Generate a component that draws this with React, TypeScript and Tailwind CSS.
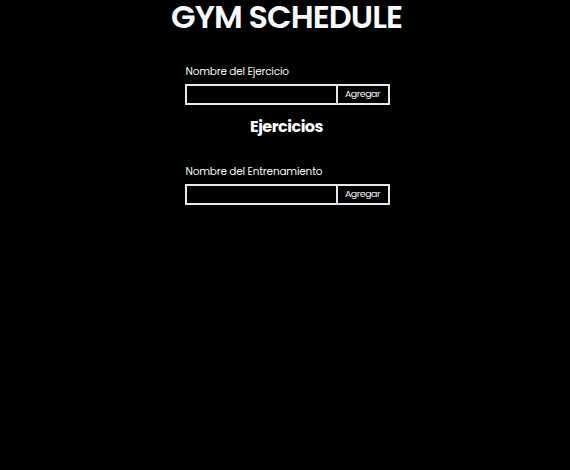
import React, { useState } from 'react';

const FormRow: React.FC<{ label: string }> = ({ label }) => {
  const [value, setValue] = useState('');
  return (
    <div className="w-[205px] mx-auto translate-x-[2px]">
      <label className="block pl-[1px] text-[10.5px] leading-[16px] tracking-[-0.2px] text-gray-100">{label}</label>
      <div className="flex mt-[4px] h-[21px]">
        <input
          value={value}
          onChange={e => setValue(e.target.value)}
          className="flex-1 min-w-0 bg-black border-2 border-gray-200 outline-none text-white text-[11px] px-1"
        />
        <button className="w-[52px] bg-black border-2 border-l-0 border-gray-200 text-[9.5px] tracking-[-0.5px] text-gray-100">
          Agregar
        </button>
      </div>
    </div>
  );
};

const App: React.FC = () => {
  return (
    <div className="min-h-[470px] bg-black text-white font-['Poppins','Inter','Open_Sans',sans-serif]">
      <h1 className="text-center text-[32px] font-semibold leading-[34px] tracking-[-0.95px] text-gray-50 pl-[3px]">GYM SCHEDULE</h1>
      <div className="mt-[30px]">
        <FormRow label="Nombre del Ejercicio" />
      </div>
      <h2 className="mt-[11px] text-center text-[16px] font-bold leading-[22px] tracking-[-0.5px] pl-[3px]">Ejercicios</h2>
      <div className="mt-[26px]">
        <FormRow label="Nombre del Entrenamiento" />
      </div>
    </div>
  );
};

export default App;
